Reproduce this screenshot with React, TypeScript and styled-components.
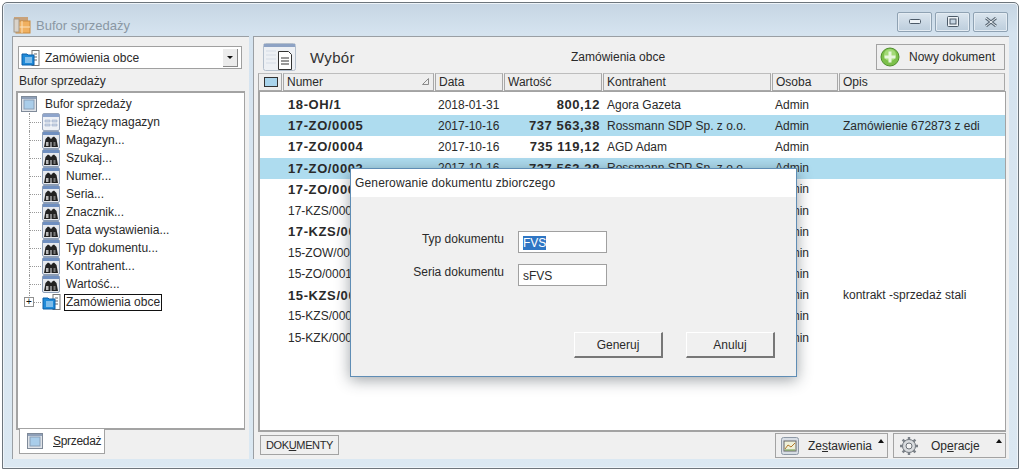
import React from "react";
import styled, { createGlobalStyle } from "styled-components";

const FONT = `"Liberation Sans", Arial, sans-serif`;

const GlobalStyle = createGlobalStyle`
  html, body { margin: 0; padding: 0; background: #fff; }
  body { font: 12px ${FONT}; color: #2a2a2a; overflow: hidden; }
  * { box-sizing: border-box; }
`;

const Window = styled.div`
  position: relative;
  width: 1017px;
  height: 467px;
  margin: 2px 0 0 2px;
  border: 1px solid #6d757c;
  border-radius: 5px 5px 0 0;
  background: linear-gradient(#c6d5e3, #d5e3ef 30px, #dbe8f2);
  padding: 0 9px 9px;
  display: flex;
  flex-direction: column;
  box-shadow: inset 0 0 0 1px #eef4f9;
`;

const TitleBar = styled.div`
  height: 33px;
  display: flex;
  align-items: center;
  padding: 11px 0 0 1px;
  gap: 5px;
  flex: none;
`;

const TitleText = styled.span`
  font-size: 13px;
  color: #8a97a3;
`;

const WindowButtons = styled.div`
  margin-left: auto;
  display: flex;
  gap: 3px;
  margin-top: -7px;
  margin-right: 1px;
`;

const WindowButton = styled.div`
  width: 35px;
  height: 20px;
  border: 1px solid #8fa2b3;
  border-radius: 2px;
  background: linear-gradient(#dbe5ee, #bccddc);
  display: flex;
  align-items: center;
  justify-content: center;
  box-shadow: inset 0 0 0 1px #e4ecf3;
`;

const Panels = styled.div`
  flex: 1;
  display: flex;
  gap: 4px;
  min-height: 0;
`;

const Panel = styled.div`
  background: #f0f0f0;
  border-top: 1px solid #9a9fa4;
  border-left: 1px solid #9a9fa4;
  display: flex;
  flex-direction: column;
`;

const LeftPanel = styled(Panel)`
  width: 237px;
  flex: none;
  padding: 9px 4px 0 3px;
`;

const RightPanel = styled(Panel)`
  flex: 1;
  min-width: 0;
  padding: 4px 3px 0 4px;
`;

const Combo = styled.div`
  height: 23px;
  flex: none;
  margin: 0 3px 0 2px;
  background: #fff;
  border: 1px solid #a0a0a0;
  display: flex;
  align-items: center;
  padding: 0 3px 0 2px;
  gap: 5px;
  font-size: 12px;
`;

const ComboArrow = styled.div`
  margin-left: auto;
  width: 15px;
  height: 18px;
  background: #ececec;
  border-right: 1px solid #888;
  border-bottom: 1px solid #888;
  display: flex;
  align-items: center;
  justify-content: center;
  &::before {
    content: "";
    border: 3px solid transparent;
    border-top: 3px solid #111;
    margin-top: 3px;
  }
`;

const GroupLabel = styled.div`
  height: 22px;
  flex: none;
  line-height: 25px;
  padding-left: 3px;
  font-size: 12px;
`;

const Tree = styled.div`
  flex: 1;
  background: #fff;
  border: 2px solid #a3a3a3;
  border-right-width: 1px;
  padding: 2px 0 0 3px;
  min-height: 0;
`;

const TreeRow = styled.div<{ $child?: boolean; $last?: boolean }>`
  position: relative;
  height: 18px;
  display: flex;
  align-items: center;
  gap: ${(p) => (p.$child ? 6 : 8)}px;
  padding-left: ${(p) => (p.$child ? 21 : 0)}px;
  font-size: 12px;
  white-space: nowrap;
  ${(p) =>
    p.$child &&
    `&::before {
      content: "";
      position: absolute;
      left: 8px;
      top: 9px;
      width: 12px;
      border-top: 1px dotted #999;
    }
    &::after {
      content: "";
      position: absolute;
      left: 8px;
      top: 0;
      height: ${p.$last ? "9px" : "18px"};
      border-left: 1px dotted #999;
    }`}
`;

const Expander = styled.div`
  position: absolute;
  z-index: 1;
  left: 3px;
  top: 4px;
  width: 10px;
  height: 10px;
  background: #fff;
  border: 1px solid #909090;
  display: flex;
  align-items: center;
  justify-content: center;
  font: 10px/8px ${FONT};
  color: #111;
`;

const FocusLabel = styled.span`
  border: 1px solid #111;
  padding: 0 1px;
  line-height: 15px;
  margin-left: -3px;
  font-size: 12px;
`;

const TabStrip = styled.div`
  height: 25px;
  flex: none;
  padding-left: 3px;
  margin-bottom: 4px;
`;

const Tab = styled.div`
  width: 86px;
  height: 25px;
  margin-top: -1px;
  background: #fff;
  border: 1px solid #a3a3a3;
  border-top: 0;
  display: flex;
  align-items: center;
  padding-left: 7px;
  gap: 10px;
  font-size: 12px;
  letter-spacing: -0.3px;
`;

const Underlined = styled.span`
  text-decoration: underline;
`;

const Toolbar = styled.div`
  height: 32px;
  flex: none;
  display: flex;
  align-items: center;
  padding-left: 5px;
`;

const ToolbarTitle = styled.span`
  font-size: 15px;
  letter-spacing: 0.3px;
  margin-left: 14px;
  width: 261px;
  color: #333;
`;

const ToolbarCaption = styled.span`
  font-size: 12px;
  width: 305px;
`;

const NewButton = styled.div`
  width: 129px;
  height: 26px;
  flex: none;
  border: 1px solid #a3a3a3;
  background: #efefef;
  display: flex;
  align-items: center;
  padding-left: 3px;
  gap: 9px;
  font-size: 12px;
`;

const HeaderRow = styled.div`
  display: flex;
  height: 18px;
  flex: none;
  gap: 1px;
`;

const HeaderCell = styled.div<{ $w: number }>`
  position: relative;
  width: ${(p) => p.$w}px;
  flex: none;
  background: #eeeeee;
  border: 1px solid #a8a8a8;
  border-top-color: #bdbdbd;
  display: flex;
  align-items: center;
  padding: 0 0 1px 3px;
  font-size: 12px;
`;

const SortMark = styled.svg`
  position: absolute;
  right: 3px;
  top: 3px;
`;

const TableBody = styled.div`
  flex: 1;
  background: #fff;
  border: 2px solid #a3a3a3;
  border-top-width: 1px;
  border-right-width: 1px;
  padding-top: 2px;
  min-height: 0;
`;

const Row = styled.div<{ $selected?: boolean }>`
  display: flex;
  height: 21.2px;
  align-items: center;
  background: ${(p) => (p.$selected ? "#aedcef" : "transparent")};
  font-size: 12px;
  white-space: nowrap;
`;

const Cell = styled.div<{ $w: number; $pad?: number; $right?: boolean; $bold?: boolean }>`
  width: ${(p) => p.$w}px;
  flex: none;
  padding-left: ${(p) => p.$pad ?? 3}px;
  text-align: ${(p) => (p.$right ? "right" : "left")};
  font-size: ${(p) => (p.$bold ? 13 : 12)}px;
  font-weight: ${(p) => (p.$bold ? 700 : 400)};
  letter-spacing: ${(p) => (p.$bold ? 0.6 : 0)}px;
  overflow: hidden;
`;

const BottomBar = styled.div`
  height: 27px;
  flex: none;
  display: flex;
  align-items: flex-start;
  padding-left: 2px;
`;

const DocsButton = styled.div`
  width: 79px;
  height: 20px;
  margin-top: 3px;
  border: 1px solid #a3a3a3;
  background: #efefef;
  display: flex;
  align-items: center;
  justify-content: center;
  font-size: 11px;
  letter-spacing: -0.35px;
`;

const MenuButton = styled.div<{ $first?: boolean; $gap: number }>`
  position: relative;
  width: 113px;
  height: 25px;
  margin-top: 1px;
  margin-left: ${(p) => (p.$first ? "auto" : "5px")};
  border: 1px solid #a3a3a3;
  background: #efefef;
  display: flex;
  align-items: center;
  padding-left: 5px;
  gap: ${(p) => p.$gap}px;
  font-size: 12px;
  &::after {
    content: "";
    position: absolute;
    right: 3px;
    top: 5px;
    border: 3px solid transparent;
    border-bottom: 4px solid #111;
    border-top: 0;
  }
`;

const Dialog = styled.div`
  position: absolute;
  left: 347px;
  top: 165px;
  width: 447px;
  height: 209px;
  background: #f0f0f0;
  border: 1px solid #5f8db5;
  box-shadow: 0 3px 14px rgba(40, 50, 60, 0.45);
  display: flex;
  flex-direction: column;
`;

const DialogTitle = styled.div`
  height: 28px;
  flex: none;
  background: #fff;
  padding-left: 4px;
  line-height: 29px;
  font-size: 12px;
  letter-spacing: 0.15px;
`;

const DialogForm = styled.div`
  display: grid;
  grid-template-columns: 153px 89px;
  column-gap: 14px;
  row-gap: 11px;
  padding-top: 34px;
`;

const FieldLabel = styled.div`
  text-align: right;
  font-size: 12px;
  line-height: 16px;
`;

const Field = styled.div`
  height: 22px;
  background: #fff;
  border: 1px solid #a0a0a0;
  padding: 4px 4px 0;
  font-size: 12px;
  line-height: 15px;
`;

const Selection = styled.span`
  background: #2f76c4;
  color: #fff;
`;

const DialogActions = styled.div`
  display: flex;
  gap: 23px;
  justify-content: flex-end;
  margin-top: auto;
  padding: 0 21px 18px 0;
`;

const DialogButton = styled.div`
  width: 89px;
  height: 26px;
  background: #f0f0f0;
  border-top: 1px solid #fff;
  border-left: 1px solid #fff;
  border-right: 2px solid #777;
  border-bottom: 2px solid #777;
  display: flex;
  align-items: center;
  justify-content: center;
  font-size: 12px;
`;

const Binoculars = () => (
  <svg width="18" height="18" viewBox="0 0 18 18">
    <rect x="0.5" y="0.5" width="17" height="17" rx="1.5" fill="#e6e9ee" stroke="#8c9db5" />
    <rect x="1" y="1" width="16" height="3" fill="#6f8fc0" />
    <path d="M2 16 L3.5 8 L6 5.5 L8.5 7 L8.5 16 Z M9.5 16 L9.5 7 L12 5.5 L14.5 8 L16 16 Z" fill="#222" />
    <rect x="7" y="8" width="4" height="3" fill="#222" />
    <rect x="4" y="11" width="2.5" height="4" fill="#b9b9b9" />
    <rect x="11.5" y="11" width="2" height="4" fill="#777" />
  </svg>
);

const DocList = () => (
  <svg width="19" height="16" viewBox="0 0 19 16">
    <rect x="11" y="0.5" width="7" height="15" fill="#fff" stroke="#777" />
    <path d="M13 4h3M13 7h3M13 10h3" stroke="#666" />
    <path d="M1 4h5l1 1h6v10H1Z" fill="#1f8ad8" stroke="#0d5fa8" />
    <path d="M4 8h7M4 10h7M4 12h7" stroke="#dff1ff" />
  </svg>
);

const GridIcon = () => (
  <svg width="18" height="18" viewBox="0 0 18 18">
    <rect x="0.5" y="0.5" width="17" height="17" rx="1.5" fill="#eef1f6" stroke="#9aa7bd" />
    <rect x="1" y="1" width="16" height="3" fill="#8ea5cc" />
    <path d="M3 7h5v2H3Zm7 0h5v2h-5ZM3 11h5v2H3Zm7 0h5v2h-5Z" fill="#cbd5e5" stroke="#9fb0c9" strokeWidth="0.6" />
  </svg>
);

const PanelIcon = () => (
  <svg width="16" height="16" viewBox="0 0 16 16">
    <rect x="0.5" y="0.5" width="15" height="15" fill="#dfe3e8" stroke="#7f8a99" />
    <rect x="1" y="1" width="14" height="2" fill="#8fa0b8" />
    <rect x="3" y="4" width="10" height="9" fill="#a9cdea" stroke="#8aa0b8" />
  </svg>
);

const ToolbarIcon = () => (
  <svg width="33" height="28" viewBox="0 0 33 28">
    <rect x="0.5" y="0.5" width="32" height="27" rx="2" fill="#edf0f4" stroke="#b4bfcc" />
    <rect x="1" y="1" width="31" height="3" fill="#8da2c4" />
    <path d="M3 8h10M3 12h10M3 16h10M3 20h10" stroke="#d5dce6" />
    <path d="M15.5 8.5h10l3 3v15h-13Z" fill="#fff" stroke="#333" />
    <path d="M18 15h8M18 18h8M18 21h8" stroke="#333" />
  </svg>
);

const PlusIcon = () => (
  <svg width="20" height="20" viewBox="0 0 20 20">
    <circle cx="10" cy="10" r="9" fill="#7cc04a" stroke="#4f8f2c" />
    <circle cx="10" cy="8" r="6" fill="#a4da78" />
    <path d="M10 4.5v11M4.5 10h11" stroke="#e8f6dd" strokeWidth="3" />
  </svg>
);

const ChartIcon = () => (
  <svg width="18" height="18" viewBox="0 0 18 18">
    <rect x="0.5" y="0.5" width="17" height="17" rx="2" fill="#d7dde4" stroke="#8e99a6" />
    <rect x="3" y="4" width="12" height="10" fill="#eef0d8" stroke="#666" />
    <path d="M4 12l3-4 3 2 4-4" stroke="#b2762a" fill="none" />
    <path d="M4 13h10" stroke="#6a9c4a" />
  </svg>
);

const GearIcon = () => (
  <svg width="20" height="20" viewBox="0 0 20 20">
    <circle cx="10" cy="10" r="6.5" fill="#d8dbde" stroke="#6d737a" />
    <circle cx="10" cy="10" r="3" fill="#f4f4f4" stroke="#6d737a" />
    <path
      d="M10 1v3M10 16v3M1 10h3M16 10h3M3.6 3.6l2.1 2.1M14.3 14.3l2.1 2.1M3.6 16.4l2.1-2.1M14.3 5.7l2.1-2.1"
      stroke="#7a8087"
      strokeWidth="2.4"
    />
  </svg>
);

const TitleIcon = () => (
  <svg width="18" height="18" viewBox="0 0 18 18">
    <rect x="1" y="1" width="14" height="4" fill="#c9a27a" />
    <rect x="3" y="5" width="14" height="12" fill="#f0b060" stroke="#c98a3e" />
    <path d="M9 5v12M3 11h14" stroke="#fbe2bd" />
    <rect x="1" y="3" width="5" height="13" fill="#d9d3ca" stroke="#a49a8c" />
  </svg>
);

const treeItems = [
  "Magazyn...",
  "Szukaj...",
  "Numer...",
  "Seria...",
  "Znacznik...",
  "Data wystawienia...",
  "Typ dokumentu...",
  "Kontrahent...",
  "Wartość...",
];

const columns = [
  { label: "Numer", w: 151 },
  { label: "Data", w: 68 },
  { label: "Wartość", w: 98 },
  { label: "Kontrahent", w: 168 },
  { label: "Osoba", w: 66 },
  { label: "Opis", w: 166 },
];

type Doc = {
  numer: string;
  data: string;
  wartosc: string;
  kontrahent: string;
  opis?: string;
  bold?: boolean;
  selected?: boolean;
};

const docs: Doc[] = [
  { numer: "18-OH/1", data: "2018-01-31", wartosc: "800,12", kontrahent: "Agora Gazeta", bold: true },
  { numer: "17-ZO/0005", data: "2017-10-16", wartosc: "737 563,38", kontrahent: "Rossmann SDP Sp. z o.o.", opis: "Zamówienie 672873 z edi", bold: true, selected: true },
  { numer: "17-ZO/0004", data: "2017-10-16", wartosc: "735 119,12", kontrahent: "AGD Adam", bold: true },
  { numer: "17-ZO/0003", data: "2017-10-16", wartosc: "737 563,38", kontrahent: "Rossmann SDP Sp. z o.o.", bold: true, selected: true },
  { numer: "17-ZO/0002", data: "", wartosc: "", kontrahent: "", bold: true },
  { numer: "17-KZS/0002", data: "", wartosc: "", kontrahent: "" },
  { numer: "17-KZS/0001", data: "", wartosc: "", kontrahent: "", bold: true },
  { numer: "15-ZOW/0001", data: "", wartosc: "", kontrahent: "" },
  { numer: "15-ZO/0001", data: "", wartosc: "", kontrahent: "" },
  { numer: "15-KZS/0003", data: "", wartosc: "", kontrahent: "", opis: "kontrakt -sprzedaż stali", bold: true },
  { numer: "15-KZS/0002", data: "", wartosc: "", kontrahent: "" },
  { numer: "15-KZK/0001", data: "", wartosc: "", kontrahent: "" },
];

export default function App() {
  return (
    <>
      <GlobalStyle />
      <Window>
        <TitleBar>
          <TitleIcon />
          <TitleText>Bufor sprzedaży</TitleText>
          <WindowButtons>
            <WindowButton>
              <svg width="12" height="6" viewBox="0 0 12 6">
                <rect x="0.5" y="0.5" width="11" height="4" rx="1" fill="#eef3f7" stroke="#4c5a68" />
              </svg>
            </WindowButton>
            <WindowButton>
              <svg width="12" height="11" viewBox="0 0 12 11">
                <rect x="0.5" y="0.5" width="11" height="10" rx="1" fill="#eef3f7" stroke="#4c5a68" />
                <rect x="3" y="3" width="6" height="5" fill="#c6d5e3" stroke="#4c5a68" />
              </svg>
            </WindowButton>
            <WindowButton>
              <svg width="14" height="10" viewBox="0 0 14 10">
                <path d="M2 1l10 8M12 1L2 9" stroke="#5d6b78" strokeWidth="3" />
                <path d="M2 1l10 8M12 1L2 9" stroke="#eef3f7" strokeWidth="1" />
              </svg>
            </WindowButton>
          </WindowButtons>
        </TitleBar>

        <Panels>
          <LeftPanel>
            <Combo>
              <DocList />
              Zamówienia obce
              <ComboArrow />
            </Combo>
            <GroupLabel>Bufor sprzedaży</GroupLabel>
            <Tree>
              <TreeRow>
                <PanelIcon />
                Bufor sprzedaży
              </TreeRow>
              <TreeRow $child>
                <GridIcon />
                Bieżący magazyn
              </TreeRow>
              {treeItems.map((item) => (
                <TreeRow $child key={item}>
                  <Binoculars />
                  {item}
                </TreeRow>
              ))}
              <TreeRow $child $last>
                <Expander>+</Expander>
                <DocList />
                <FocusLabel>Zamówienia obce</FocusLabel>
              </TreeRow>
            </Tree>
            <TabStrip>
              <Tab>
                <PanelIcon />
                <span>
                  <Underlined>S</Underlined>przedaż
                </span>
              </Tab>
            </TabStrip>
          </LeftPanel>

          <RightPanel>
            <Toolbar>
              <ToolbarIcon />
              <ToolbarTitle>Wybór</ToolbarTitle>
              <ToolbarCaption>Zamówienia obce</ToolbarCaption>
              <NewButton>
                <PlusIcon />
                Nowy dokument
              </NewButton>
            </Toolbar>
            <HeaderRow>
              <HeaderCell $w={24}>
                <svg width="14" height="10" viewBox="0 0 14 10" style={{ marginLeft: 2 }}>
                  <rect x="0.5" y="0.5" width="13" height="9" fill="#a9d4ec" stroke="#333" />
                </svg>
              </HeaderCell>
              {columns.map((col) => (
                <HeaderCell $w={col.w} key={col.label}>
                  {col.label}
                  {col.label === "Numer" && (
                    <SortMark width="9" height="9" viewBox="0 0 9 9">
                      <path d="M7.5 1.5V7.5H1.5Z" fill="none" stroke="#8a8a8a" />
                    </SortMark>
                  )}
                </HeaderCell>
              ))}
            </HeaderRow>
            <TableBody>
              {docs.map((doc) => (
                <Row $selected={doc.selected} key={doc.numer}>
                  <Cell $w={25} />
                  <Cell $w={150} $bold={doc.bold}>
                    {doc.numer}
                  </Cell>
                  <Cell $w={66}>{doc.data}</Cell>
                  <Cell $w={99} $right $bold>
                    {doc.wartosc}
                  </Cell>
                  <Cell $w={168} $pad={7}>
                    {doc.kontrahent}
                  </Cell>
                  <Cell $w={68} $pad={7}>
                    Admin
                  </Cell>
                  <Cell $w={160} $pad={7}>
                    {doc.opis}
                  </Cell>
                </Row>
              ))}
            </TableBody>
            <BottomBar>
              <DocsButton>
                <span>
                  DOK<Underlined>U</Underlined>MENTY
                </span>
              </DocsButton>
              <MenuButton $first $gap={9}>
                <ChartIcon />
                <span>
                  Ze<Underlined>s</Underlined>tawienia
                </span>
              </MenuButton>
              <MenuButton $gap={12}>
                <GearIcon />
                <span>
                  Op<Underlined>e</Underlined>racje
                </span>
              </MenuButton>
            </BottomBar>
          </RightPanel>
        </Panels>

        <Dialog>
          <DialogTitle>Generowanie dokumentu zbiorczego</DialogTitle>
          <DialogForm>
            <FieldLabel>Typ dokumentu</FieldLabel>
            <Field>
              <Selection>FVS</Selection>
            </Field>
            <FieldLabel>Seria dokumentu</FieldLabel>
            <Field>sFVS</Field>
          </DialogForm>
          <DialogActions>
            <DialogButton>Generuj</DialogButton>
            <DialogButton>Anuluj</DialogButton>
          </DialogActions>
        </Dialog>
      </Window>
    </>
  );
}
